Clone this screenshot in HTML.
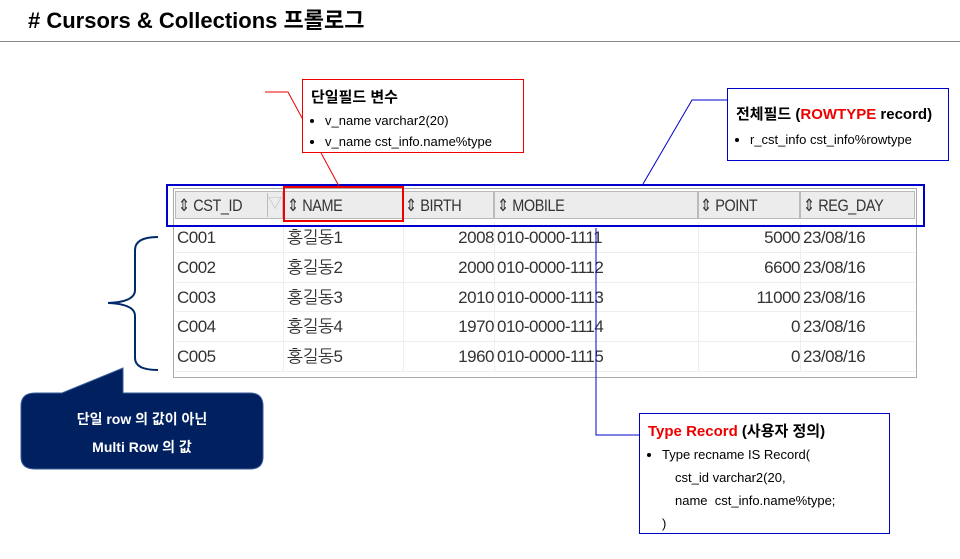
<!DOCTYPE html><html><head><meta charset="utf-8"><style>
body{margin:0;width:960px;height:559px;background:#fff;position:relative;overflow:hidden;font-family:"Liberation Sans","Noto Sans CJK KR",sans-serif}
.a{position:absolute}
.t{font-family:"Liberation Sans","NanumGothic","Noto Sans CJK KR",sans-serif;font-size:17px;color:#333;letter-spacing:-0.5px}
.hd{transform:scaleX(0.85);transform-origin:left center;white-space:nowrap}
.h{background:#ececec;border:1px solid #bbb;height:28px;top:191px;box-sizing:border-box}
.box{border:1px solid;background:#fff;box-sizing:border-box;font-size:13px;color:#000}
ul{margin:0;padding-left:14px}li{line-height:21px}
</style></head><body>
<div class="a" style="left:28px;top:3px;font-size:22px;font-weight:bold;color:#000">#&nbsp;Cursors &amp; Collections 프롤로그</div>
<div class="a" style="left:0;top:41px;width:960px;height:1px;background:#888"></div>

<div class="a" style="left:173px;top:188px;width:744px;height:190px;border:1px solid #aaa;box-sizing:border-box"></div>
<div class="a h" style="left:175px;width:108px"></div>
<div class="a h" style="left:283px;width:120px"></div>
<div class="a h" style="left:403px;width:91px"></div>
<div class="a h" style="left:494px;width:204px"></div>
<div class="a h" style="left:698px;width:102px"></div>
<div class="a h" style="left:800px;width:115px"></div>
<div class="a t hd" style="left:178px;top:196px">⇕ CST_ID</div>
<div class="a" style="left:267px;top:193px;width:14px;height:24px;border-left:1px solid #bbb;color:#bbb;font-size:14px">▽</div>
<div class="a t hd" style="left:287px;top:196px">⇕ NAME</div>
<div class="a t hd" style="left:405px;top:196px">⇕ BIRTH</div>
<div class="a t hd" style="left:497px;top:196px">⇕ MOBILE</div>
<div class="a t hd" style="left:700px;top:196px">⇕ POINT</div>
<div class="a t hd" style="left:803px;top:196px">⇕ REG_DAY</div>

<div class="a" style="left:283px;top:222px;width:1px;height:150px;background:#eee"></div>
<div class="a" style="left:403px;top:222px;width:1px;height:150px;background:#eee"></div>
<div class="a" style="left:494px;top:222px;width:1px;height:150px;background:#eee"></div>
<div class="a" style="left:698px;top:222px;width:1px;height:150px;background:#eee"></div>
<div class="a" style="left:800px;top:222px;width:1px;height:150px;background:#eee"></div>
<div class="a" style="left:175px;top:252px;width:740px;height:1px;background:#eee"></div>
<div class="a" style="left:175px;top:282px;width:740px;height:1px;background:#eee"></div>
<div class="a" style="left:175px;top:311px;width:740px;height:1px;background:#eee"></div>
<div class="a" style="left:175px;top:341px;width:740px;height:1px;background:#eee"></div>
<div class="a" style="left:175px;top:371px;width:740px;height:1px;background:#eee"></div>

<div class="a t" style="left:177px;top:223px;line-height:29.8px">C001<br>C002<br>C003<br>C004<br>C005</div>
<div class="a t" style="left:287px;top:223px;line-height:29.8px">홍길동1<br>홍길동2<br>홍길동3<br>홍길동4<br>홍길동5</div>
<div class="a t" style="left:403px;width:91px;text-align:right;top:223px;line-height:29.8px">2008<br>2000<br>2010<br>1970<br>1960</div>
<div class="a t" style="left:497px;top:223px;line-height:29.8px">010-0000-1111<br>010-0000-1112<br>010-0000-1113<br>010-0000-1114<br>010-0000-1115</div>
<div class="a t" style="left:698px;width:102px;text-align:right;top:223px;line-height:29.8px">5000<br>6600<br>11000<br>0<br>0</div>
<div class="a t" style="left:803px;top:223px;line-height:29.8px">23/08/16<br>23/08/16<br>23/08/16<br>23/08/16<br>23/08/16</div>

<div class="a" style="left:166px;top:184px;width:759px;height:43px;border:2px solid #0000cc;box-sizing:border-box"></div>
<div class="a" style="left:283px;top:186px;width:121px;height:36px;border:2px solid #e00;box-sizing:border-box"></div>

<svg class="a" style="left:0;top:0" width="960" height="559">
<path d="M265 92 L288 92 L340 188" stroke="#e00" fill="none"/>
<path d="M727 100 L692 100 L643 184" stroke="#00c" fill="none"/>
<path d="M596 228 L596 435 L639 435" stroke="#00c" fill="none"/>
<path d="M158 237 Q135 237 135 250 L135 290 Q135 302 108 303 Q135 304 135 316 L135 358 Q135 370 158 370" stroke="#002a6a" stroke-width="2" fill="none"/>
<path d="M35 393 L62 393 L123 368 L123 393 L250 393 Q263 393 263 406 L263 457 Q263 469 250 469 L35 469 Q21 469 21 457 L21 406 Q21 393 35 393 Z" fill="#002060" stroke="#3a5a9a"/>
</svg>
<div class="a" style="left:21px;top:405px;width:242px;text-align:center;color:#fff;font-weight:bold;font-size:14px;line-height:28px">단일 row 의 값이 아닌<br>Multi Row 의 값</div>

<div class="a box" style="left:302px;top:79px;width:222px;height:74px;border-color:#e00;padding:6px 8px">
<div style="font-weight:bold;font-size:15px;margin-bottom:3px">단일필드 변수</div>
<ul><li>v_name varchar2(20)</li><li>v_name cst_info.name%type</li></ul></div>
<div class="a box" style="left:727px;top:88px;width:222px;height:73px;border-color:#00c;padding:14px 8px 0">
<div style="font-weight:bold;font-size:15px;margin-bottom:5px">전체필드 (<span style="color:#e00">ROWTYPE</span> record)</div>
<ul><li>r_cst_info cst_info%rowtype</li></ul></div>
<div class="a box" style="left:639px;top:413px;width:251px;height:121px;border-color:#00c;padding:6px 8px">
<div style="font-weight:bold;font-size:15px;margin-bottom:2px"><span style="color:#e00">Type Record</span> (사용자 정의)</div>
<ul style="line-height:23px"><li style="line-height:23px">Type recname IS Record(</li></ul>
<div style="line-height:23px;padding-left:27px">cst_id varchar2(20,<br>name&nbsp;&nbsp;cst_info.name%type;</div>
<div style="line-height:23px;padding-left:14px">)</div></div>
</body></html>
